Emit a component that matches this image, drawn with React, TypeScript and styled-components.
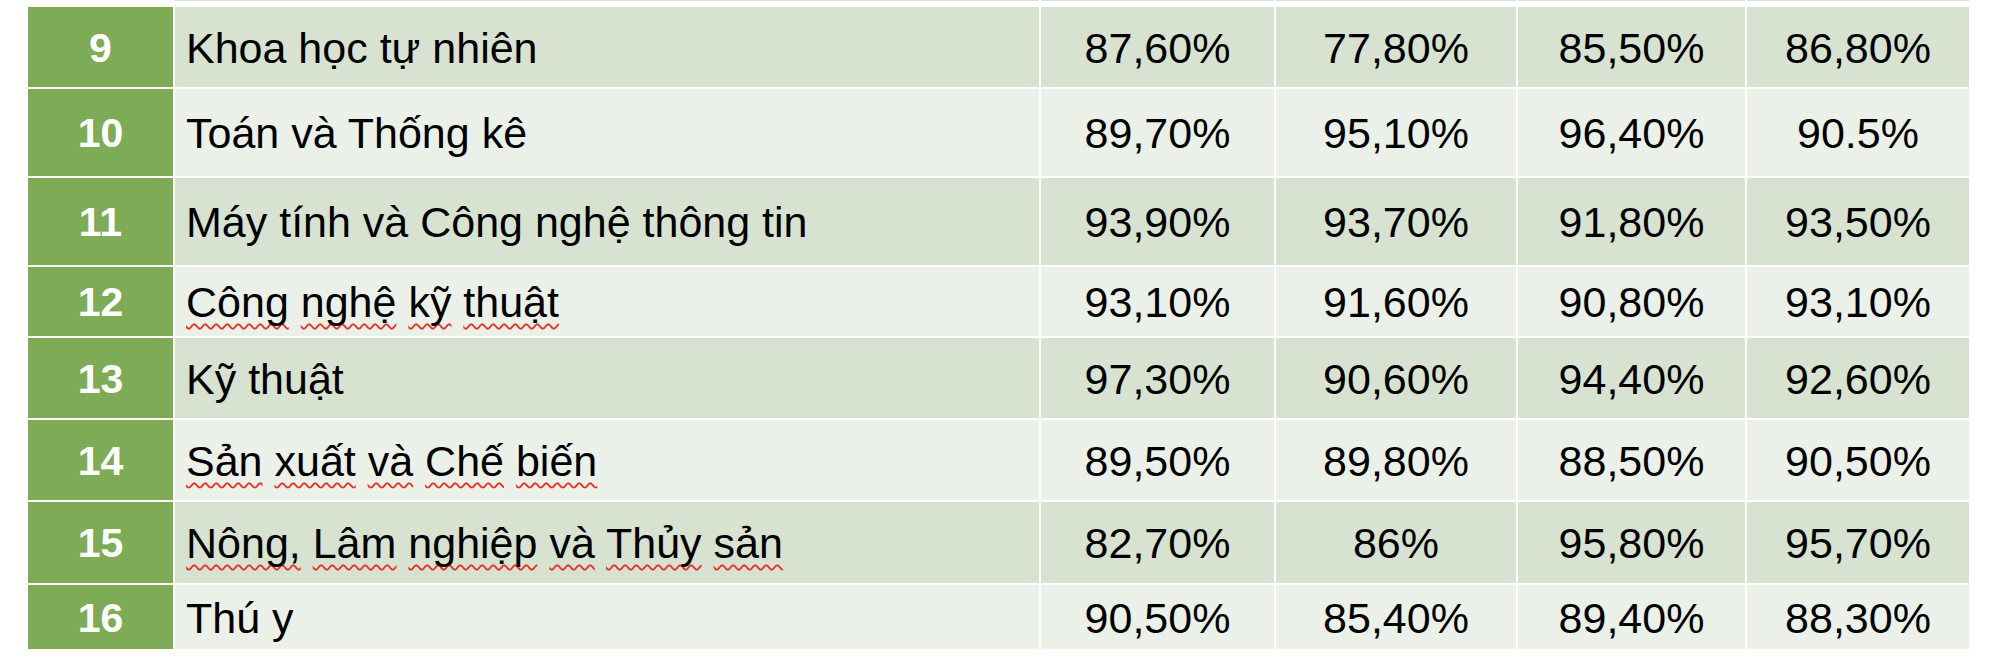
import React from "react";
import styled, { createGlobalStyle } from "styled-components";

const GlobalStyle = createGlobalStyle`
  html, body {
    margin: 0;
    padding: 0;
    background: #ffffff;
  }
  body {
    font-family: "Liberation Sans", Arial, sans-serif;
  }
`;

const COLS = "145px 864px 233px 240px 227px 222px";

const Page = styled.div`
  width: 2000px;
  height: 657px;
  background: #ffffff;
  overflow: hidden;
`;

const Table = styled.div`
  display: flex;
  flex-direction: column;
  gap: 2px;
  padding-left: 28px;
`;

const Sliver = styled.div`
  display: grid;
  grid-template-columns: ${COLS};
  column-gap: 2px;
  height: 1px;
  margin-bottom: 4px;
`;

const SliverCell = styled.div<{ $first?: boolean }>`
  background: ${(p) => (p.$first ? "#ffffff" : "#d7e2d1")};
`;

const Row = styled.div<{ $h: number }>`
  display: grid;
  grid-template-columns: ${COLS};
  column-gap: 2px;
  height: ${(p) => p.$h}px;
`;

const IndexCell = styled.div`
  background: #7eab55;
  color: #ffffff;
  font-weight: bold;
  font-size: 41px;
  display: flex;
  align-items: center;
  justify-content: center;
  padding-top: 2px;
`;

const Cell = styled.div<{ $alt: boolean }>`
  background: ${(p) => (p.$alt ? "#ebf0e8" : "#d7e2d1")};
  color: #000000;
  font-size: 43px;
  display: flex;
  align-items: center;
  padding-top: 2px;
`;

const NameCell = styled(Cell)`
  padding-left: 11px;
`;

const NameText = styled.span`
  white-space: pre;
`;

const ValueCell = styled(Cell)`
  justify-content: center;
`;

const Misspelled = styled.span`
  text-decoration-line: underline;
  text-decoration-style: wavy;
  text-decoration-color: #e8342a;
  text-decoration-thickness: 1.5px;
  text-decoration-skip-ink: none;
  text-underline-offset: 6px;
`;

type RowData = {
  n: string;
  name: string;
  flagged?: boolean;
  values: string[];
  h: number;
};

const rows: RowData[] = [
  { n: "9", name: "Khoa học tự nhiên", values: ["87,60%", "77,80%", "85,50%", "86,80%"], h: 80 },
  { n: "10", name: "Toán và Thống kê", values: ["89,70%", "95,10%", "96,40%", "90.5%"], h: 87 },
  { n: "11", name: "Máy tính và Công nghệ thông tin", values: ["93,90%", "93,70%", "91,80%", "93,50%"], h: 87 },
  { n: "12", name: "Công nghệ kỹ thuật", flagged: true, values: ["93,10%", "91,60%", "90,80%", "93,10%"], h: 69 },
  { n: "13", name: "Kỹ thuật", values: ["97,30%", "90,60%", "94,40%", "92,60%"], h: 80 },
  { n: "14", name: "Sản xuất và Chế biến", flagged: true, values: ["89,50%", "89,80%", "88,50%", "90,50%"], h: 80 },
  { n: "15", name: "Nông, Lâm nghiệp và Thủy sản", flagged: true, values: ["82,70%", "86%", "95,80%", "95,70%"], h: 81 },
  { n: "16", name: "Thú y", values: ["90,50%", "85,40%", "89,40%", "88,30%"], h: 64 },
];

function Name({ text, flagged }: { text: string; flagged?: boolean }) {
  if (!flagged) return <NameText>{text}</NameText>;
  const words = text.split(" ");
  return (
    <NameText>
      {words.map((w, i) => (
        <React.Fragment key={i}>
          {i > 0 ? " " : ""}
          <Misspelled>{w}</Misspelled>
        </React.Fragment>
      ))}
    </NameText>
  );
}

export default function App() {
  return (
    <Page>
      <GlobalStyle />
      <Table>
        <Sliver>
          <SliverCell $first />
          <SliverCell />
          <SliverCell />
          <SliverCell />
          <SliverCell />
          <SliverCell />
        </Sliver>
        {rows.map((r, i) => {
          const alt = i % 2 === 1;
          return (
            <Row key={r.n} $h={r.h}>
              <IndexCell>{r.n}</IndexCell>
              <NameCell $alt={alt}>
                <Name text={r.name} flagged={r.flagged} />
              </NameCell>
              {r.values.map((v, j) => (
                <ValueCell key={j} $alt={alt}>
                  {v}
                </ValueCell>
              ))}
            </Row>
          );
        })}
      </Table>
    </Page>
  );
}
